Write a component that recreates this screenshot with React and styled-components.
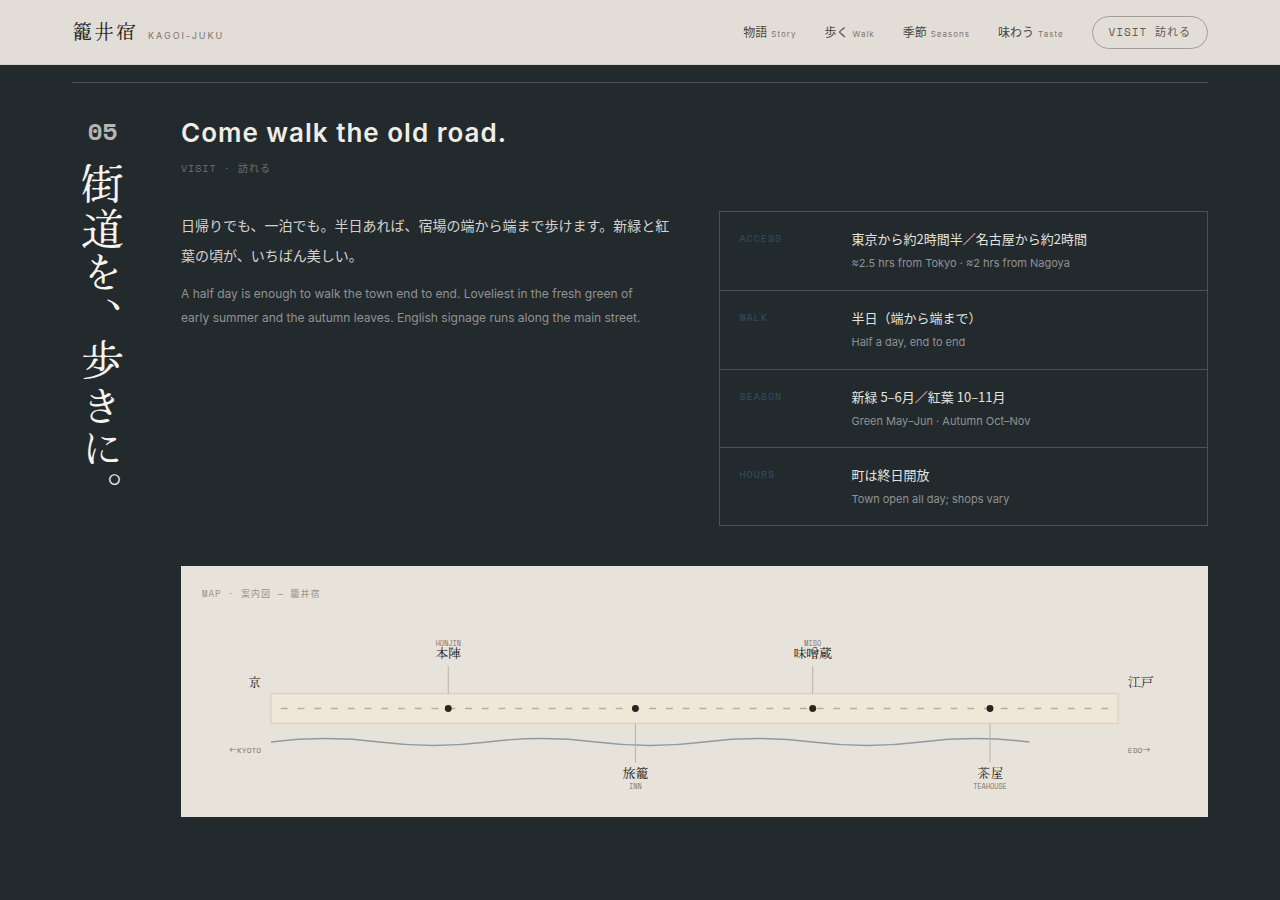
import React from "react";
import styled, { createGlobalStyle } from "styled-components";

const sans = `Inter, "Noto Sans CJK JP", sans-serif`;
const gothic = `"Noto Sans CJK JP", sans-serif`;
const mono = `"Space Mono", "Liberation Mono", "Noto Sans CJK JP", monospace`;
const mincho = `"Hina Mincho", "Noto Serif CJK JP", "Noto Sans CJK JP", serif`;

const navItems = [
  { id: "story", ja: "物語", en: "Story" },
  { id: "walk", ja: "歩く", en: "Walk" },
  { id: "seasons", ja: "季節", en: "Seasons" },
  { id: "taste", ja: "味わう", en: "Taste" },
];

const facts = [
  {
    label: "ACCESS",
    ja: "東京から約2時間半／名古屋から約2時間",
    en: "≈2.5 hrs from Tokyo · ≈2 hrs from Nagoya",
  },
  { label: "WALK", ja: "半日（端から端まで）", en: "Half a day, end to end" },
  {
    label: "SEASON",
    ja: "新緑 5–6月／紅葉 10–11月",
    en: "Green May–Jun · Autumn Oct–Nov",
  },
  { label: "HOURS", ja: "町は終日開放", en: "Town open all day; shops vary" },
];

const stops = [
  { x: 250, ja: "本陣", en: "HONJIN", above: true },
  { x: 440, ja: "旅籠", en: "INN", above: false },
  { x: 620, ja: "味噌蔵", en: "MISO", above: true },
  { x: 800, ja: "茶屋", en: "TEAHOUSE", above: false },
];

const Stop = ({ stop }) => {
  const { x, ja, en, above } = stop;
  return (
    <g>
      <line
        x1={x}
        x2={x}
        y1={above ? 57 : 115}
        y2={above ? 85 : 155}
        stroke="#b9b1a4"
      />
      <circle cx={x} cy="100" r="3.5" fill="#2a2520" />
      <PlaceName x={x} y={above ? 49 : 171} textAnchor="middle">
        {ja}
      </PlaceName>
      <PlaceNote x={x} y={above ? 37 : 182} textAnchor="middle">
        {en}
      </PlaceNote>
    </g>
  );
};

const TownMap = () => (
  <MapCard>
    <MapTitle>MAP · 案内図 — 籠井宿</MapTitle>
    <MapDrawing viewBox="0 0 1000 190" role="img" aria-label="案内図">
      <rect x="70" y="85" width="860" height="30" fill="#efe7d8" stroke="#d8cbb9" />
      <line
        x1="80"
        x2="920"
        y1="100"
        y2="100"
        stroke="#b9ae9a"
        strokeWidth="1.5"
        strokeDasharray="7 10"
      />
      <path
        d="M70 134 Q125 127 180 134 T290 134 T400 134 T510 134 T620 134 T730 134 T840 134"
        fill="none"
        stroke="#8d9ca3"
        strokeWidth="1.5"
      />
      {stops.map((stop) => (
        <Stop key={stop.en} stop={stop} />
      ))}
      <PlaceName x="60" y="78" textAnchor="end">
        京
      </PlaceName>
      <PlaceName x="940" y="78">江戸</PlaceName>
      <PlaceNote $large x="60" y="145" textAnchor="end">
        <Arrow>←</Arrow>KYOTO
      </PlaceNote>
      <PlaceNote $large x="940" y="145">
        EDO<Arrow>→</Arrow>
      </PlaceNote>
    </MapDrawing>
  </MapCard>
);

const App = () => {
  return (
    <>
      <GlobalStyle />
      <Header>
        <Brand href="#top">
          <BrandName>籠井宿</BrandName>
          <BrandRoman>KAGOI-JUKU</BrandRoman>
        </Brand>
        <Nav>
          {navItems.map((item) => (
            <NavLink key={item.id} href={`#${item.id}`}>
              {item.ja}
              <small>{item.en}</small>
            </NavLink>
          ))}
          <VisitLink href="#visit">VISIT 訪れる</VisitLink>
        </Nav>
      </Header>
      <Visit id="visit">
        <Chapter>
          <ChapterSide>
            <ChapterNumber>05</ChapterNumber>
            <ChapterTitle>街道を、歩きに。</ChapterTitle>
          </ChapterSide>
          <ChapterBody>
            <Heading>Come walk the old road.</Heading>
            <Kicker>VISIT · 訪れる</Kicker>
            <Columns>
              <div>
                <LeadJa>
                  日帰りでも、一泊でも。半日あれば、宿場の端から端まで歩けます。新緑と紅葉の頃が、いちばん美しい。
                </LeadJa>
                <LeadEn>
                  A half day is enough to walk the town end to end. Loveliest in
                  the fresh green of early summer and the autumn leaves. English
                  signage runs along the main street.
                </LeadEn>
              </div>
              <Facts>
                {facts.map((fact) => (
                  <Fact key={fact.label}>
                    <FactLabel>{fact.label}</FactLabel>
                    <FactValue>
                      {fact.ja}
                      <FactNote>{fact.en}</FactNote>
                    </FactValue>
                  </Fact>
                ))}
              </Facts>
            </Columns>
            <TownMap />
          </ChapterBody>
        </Chapter>
      </Visit>
    </>
  );
};

const GlobalStyle = createGlobalStyle`
  * {
    box-sizing: border-box;
  }
  body {
    margin: 0;
    background-color: #232a2d;
    color: #efede6;
    font-family: ${sans};
  }
  h1, h2, p, dl, dd {
    margin: 0;
  }
  a {
    color: inherit;
    text-decoration: none;
  }
`;

const Header = styled.header`
  display: flex;
  justify-content: space-between;
  align-items: center;
  padding: 16px 72px 15px;
  background-color: #e2ddd7;
  border-bottom: 1px solid #d3cec7;
  color: #4a453e;
`;

const Brand = styled.a`
  display: flex;
  align-items: baseline;
  gap: 10px;
  padding-bottom: 4px;
`;

const BrandName = styled.span`
  font-family: ${mincho};
  font-size: 20px;
  line-height: 28px;
  letter-spacing: 2px;
  color: #2a2520;
`;

const BrandRoman = styled.span`
  font-size: 9px;
  letter-spacing: 2px;
  color: #7b756c;
`;

const Nav = styled.nav`
  display: flex;
  align-items: center;
  gap: 28px;
`;

const NavLink = styled.a`
  display: flex;
  align-items: baseline;
  gap: 4px;
  font-family: ${gothic};
  font-size: 12px;
  line-height: 20px;
  small {
    font-family: ${sans};
    font-size: 8px;
    letter-spacing: 1px;
    color: #7b756c;
  }
`;

const VisitLink = styled.a`
  padding: 0 16px;
  border: 1px solid #a39e96;
  border-radius: 17px;
  font-family: ${mono};
  font-size: 11px;
  line-height: 31px;
  letter-spacing: 1px;
  color: #625c54;
`;

const Visit = styled.main`
  padding: 17px 72px 80px;
`;

const Chapter = styled.section`
  display: grid;
  grid-template-columns: auto minmax(0, 1fr);
  gap: 48px;
  padding-top: 32px;
  border-top: 1px solid #4b5052;
`;

const ChapterSide = styled.div`
  display: flex;
  flex-direction: column;
  align-items: center;
  gap: 16px;
`;

const ChapterNumber = styled.span`
  font-family: ${mono};
  font-size: 24px;
  font-weight: 700;
  line-height: 32px;
  color: #b5b6b4;
`;

const ChapterTitle = styled.h1`
  writing-mode: vertical-rl;
  font-family: ${mincho};
  font-size: 42px;
  font-weight: 400;
  line-height: 61px;
  letter-spacing: 2px;
  color: #f7f4ec;
`;

const ChapterBody = styled.div`
  min-width: 0;
`;

const Heading = styled.h2`
  font-size: 26px;
  font-weight: 600;
  line-height: 36px;
  letter-spacing: 1px;
`;

const Kicker = styled.p`
  margin-top: 10px;
  font-family: ${mono};
  font-size: 10px;
  line-height: 16px;
  letter-spacing: 1px;
  color: #6a6f70;
`;

const Columns = styled.div`
  display: grid;
  grid-template-columns: minmax(0, 1fr) minmax(0, 1fr);
  gap: 48px;
  margin-top: 34px;
`;

const LeadJa = styled.p`
  font-size: 14px;
  line-height: 30px;
  color: #d3d2cd;
`;

const LeadEn = styled.p`
  max-width: 480px;
  margin-top: 11px;
  font-size: 12px;
  line-height: 24px;
  color: #8f9393;
`;

const Facts = styled.dl`
  display: grid;
  grid-auto-rows: 1fr;
  min-height: 315px;
  border: 1px solid #4b5052;
`;

const Fact = styled.div`
  display: grid;
  grid-template-columns: 96px minmax(0, 1fr);
  gap: 16px;
  padding: 15px 20px 13px;
  & + & {
    border-top: 1px solid #4b5052;
  }
`;

const FactLabel = styled.dt`
  font-family: ${mono};
  font-size: 10px;
  line-height: 24px;
  letter-spacing: 1px;
  color: #345064;
`;

const FactValue = styled.dd`
  font-family: ${gothic};
  font-size: 13px;
  line-height: 24px;
  color: #e4e2dc;
`;

const FactNote = styled.span`
  display: block;
  font-family: ${sans};
  font-size: 11px;
  color: #8f9393;
`;

const MapCard = styled.div`
  margin-top: 40px;
  padding: 20px 21px;
  background-color: #e7e2da;
`;

const MapTitle = styled.p`
  margin-bottom: 8px;
  font-family: ${mono};
  font-size: 9px;
  line-height: 16px;
  letter-spacing: 1px;
  color: #9c9485;
`;

const MapDrawing = styled.svg`
  display: block;
  width: 100%;
`;

const PlaceName = styled.text`
  font-family: ${mincho};
  font-size: 13px;
  fill: #2a2520;
`;

const PlaceNote = styled.text`
  font-family: ${mono};
  font-size: ${({ $large }) => ($large ? "8px" : "7px")};
  fill: #7d7566;
`;

const Arrow = styled.tspan`
  font-family: ${gothic};
`;

export default App;
